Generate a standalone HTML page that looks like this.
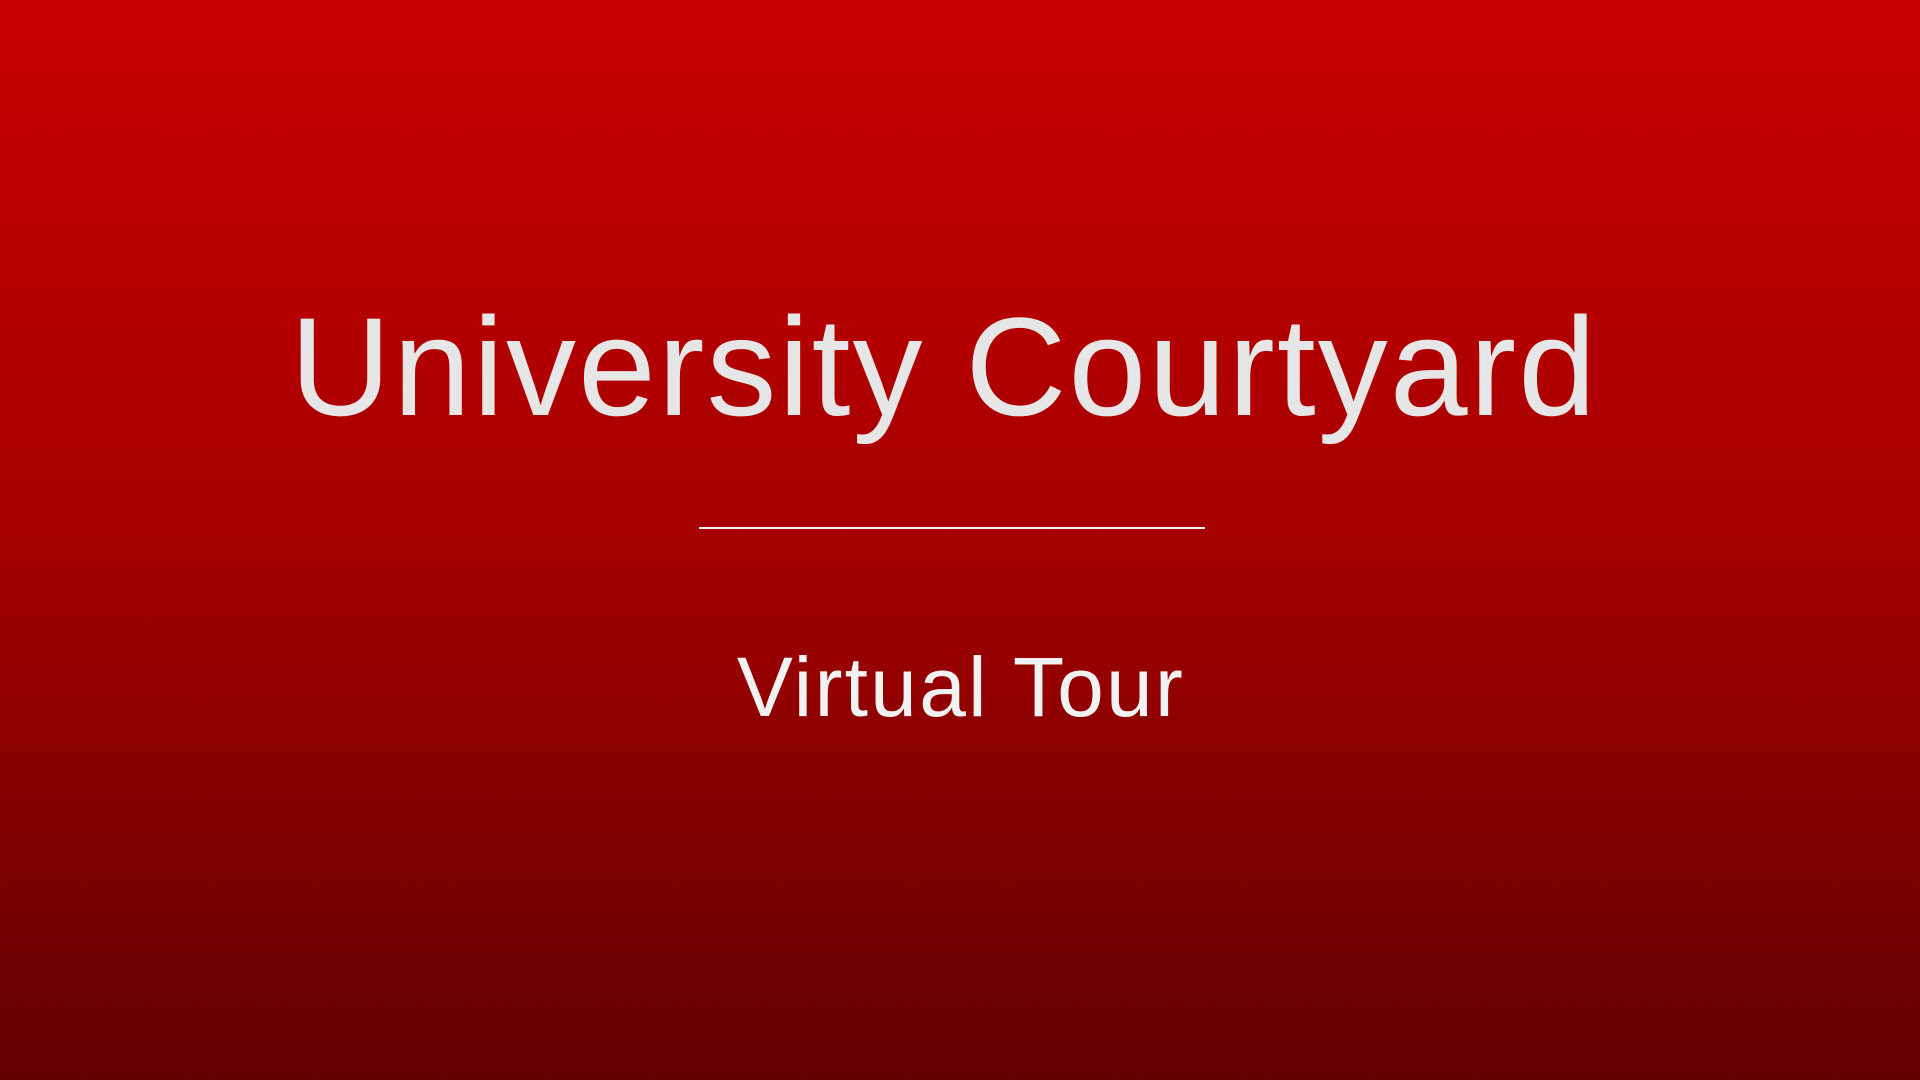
<!DOCTYPE html>
<html><head><meta charset="utf-8"><style>
html,body{margin:0;padding:0;}
body{width:1920px;height:1080px;overflow:hidden;position:relative;
background:linear-gradient(to bottom,#c80000 0%,#a50000 50%,#620000 100%);
font-family:"Liberation Sans",sans-serif;color:#e6e6e6;}
.t{position:absolute;left:0;width:1888px;text-align:center;font-size:140px;line-height:1;top:297px;white-space:nowrap;letter-spacing:2px;}
.s{position:absolute;left:0;width:1922px;text-align:center;font-size:84px;line-height:1;top:645px;white-space:nowrap;color:#f2f2f2;letter-spacing:2.2px;}
.l{position:absolute;left:699px;width:506px;top:527px;height:2px;background:#f5f5f5;}
</style></head><body>
<div class="t">University Courtyard</div>
<div class="l"></div>
<div class="s">Virtual Tour</div>
</body></html>
